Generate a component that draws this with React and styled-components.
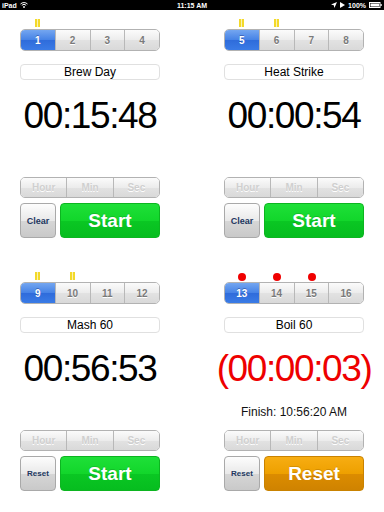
import styled, { createGlobalStyle } from "styled-components";

const GlobalStyle = createGlobalStyle`
  html, body {
    margin: 0;
    padding: 0;
    background: #fff;
    font-family: "Liberation Sans", Arial, sans-serif;
  }
  #root {
    width: 384px;
    height: 512px;
    overflow: hidden;
  }
`;

const StatusBar = styled.div`
  height: 10px;
  background: #000;
  color: #fff;
  display: flex;
  align-items: center;
  justify-content: space-between;
  padding: 0 2px;
  font-size: 7px;
  font-weight: bold;
  position: relative;
`;

const StatusSide = styled.div`
  display: flex;
  align-items: center;
  gap: 3px;
`;

const StatusClock = styled.div`
  position: absolute;
  left: 0;
  right: 0;
  text-align: center;
  pointer-events: none;
`;

const Grid = styled.div`
  display: grid;
  grid-template-columns: 140px 140px;
  grid-auto-rows: 253px;
  column-gap: 64px;
  padding: 0 20px;
`;

const Panel = styled.div`
  display: flex;
  flex-direction: column;
`;

const MarkerRow = styled.div`
  display: flex;
  height: 8px;
  margin-top: 9px;
`;

const MarkerCell = styled.div`
  flex: 1;
  display: flex;
  justify-content: center;
  align-items: center;
`;

const YellowMark = styled.span`
  width: 5px;
  height: 8px;
  background: linear-gradient(
    90deg,
    #f3d92a 0 2px,
    #fbf2b0 2px 3px,
    #f3d92a 3px 5px
  );
`;

const RedDot = styled.span`
  width: 8px;
  height: 8px;
  border-radius: 50%;
  background: #f00000;
  margin-top: 2px;
`;

const Segmented = styled.div`
  display: flex;
  height: ${({ h }) => h || 22}px;
  margin-top: ${({ mt }) => mt || 0}px;
  border: 1px solid #b2b2b2;
  border-radius: 5px;
  overflow: hidden;
  box-sizing: border-box;
`;

const Segment = styled.div`
  flex: 1;
  display: flex;
  align-items: center;
  justify-content: center;
  font-size: 10px;
  font-weight: bold;
  color: ${({ active, faded }) =>
    active ? "#fff" : faded ? "#cfcfcf" : "#7a7a7a"};
  text-shadow: ${({ active }) =>
    active ? "0 -1px 0 rgba(0,0,60,0.3)" : "0 1px 0 #fff"};
  background: ${({ active }) =>
    active
      ? "linear-gradient(#74a6f0, #4582e6 50%, #2f6cdb 52%, #3a7be6)"
      : "linear-gradient(#fbfbfb, #ececec 50%, #e2e2e2 52%, #d9d9d9)"};
  & + & {
    border-left: 1px solid #b8b8b8;
  }
`;

const Label = styled.div`
  height: 16px;
  margin-top: 13px;
  border: 1px solid #e0e0e0;
  border-radius: 4px;
  box-sizing: border-box;
  display: flex;
  align-items: center;
  justify-content: center;
  font-size: 12px;
  color: #000;
`;

const Time = styled.div`
  margin-top: ${({ mt }) => mt}px;
  height: 37px;
  line-height: 37px;
  font-size: 37px;
  letter-spacing: -1.4px;
  text-align: center;
  white-space: nowrap;
  color: ${({ alarm }) => (alarm ? "#ee0000" : "#000")};
  margin-left: ${({ alarm }) => (alarm ? -10 : 0)}px;
  margin-right: ${({ alarm }) => (alarm ? -10 : 0)}px;
`;

const Info = styled.div`
  height: 43px;
  display: flex;
  align-items: flex-start;
  justify-content: center;
  padding-top: 18px;
  box-sizing: border-box;
  font-size: 12px;
  color: #111;
  white-space: nowrap;
`;

const ButtonRow = styled.div`
  display: flex;
  gap: 4px;
  height: 35px;
  margin-top: 5px;
`;

const SmallButton = styled.div`
  width: 36px;
  box-sizing: border-box;
  border: 1px solid #a9a9a9;
  border-radius: 4px;
  background: linear-gradient(#fdfdfd, #e9e9e9 50%, #d6d6d6 52%, #c9c9c9);
  display: flex;
  align-items: center;
  justify-content: center;
  font-size: ${({ tight }) => (tight ? 8 : 9)}px;
  font-weight: bold;
  color: #22375f;
`;

const BigButton = styled.div`
  flex: 1;
  border-radius: 4px;
  display: flex;
  align-items: center;
  justify-content: center;
  font-size: 19px;
  font-weight: bold;
  color: #fff;
  text-shadow: 0 -1px 0 rgba(0, 0, 0, 0.15);
  background: ${({ tone }) =>
    tone === "orange"
      ? "linear-gradient(#f7ad12, #eea000 50%, #dc8c00 52%, #cf8300)"
      : "linear-gradient(#1ee038, #12d62b 50%, #0ac723 52%, #06bd1f)"};
  border: 1px solid
    ${({ tone }) => (tone === "orange" ? "#c98200" : "#0cb520")};
  box-sizing: border-box;
`;

const timers = [
  {
    slots: [1, 2, 3, 4],
    active: 0,
    marks: [0],
    mark: "bar",
    name: "Brew Day",
    time: "00:15:48",
    left: "Clear",
    right: "Start",
  },
  {
    slots: [5, 6, 7, 8],
    active: 0,
    marks: [0, 1],
    mark: "bar",
    name: "Heat Strike",
    time: "00:00:54",
    left: "Clear",
    right: "Start",
  },
  {
    slots: [9, 10, 11, 12],
    active: 0,
    marks: [0, 1],
    mark: "bar",
    name: "Mash 60",
    time: "00:56:53",
    left: "Reset",
    right: "Start",
  },
  {
    slots: [13, 14, 15, 16],
    active: 0,
    marks: [0, 1, 2],
    mark: "dot",
    name: "Boil 60",
    time: "(00:00:03)",
    alarm: true,
    finish: "Finish: 10:56:20 AM",
    left: "Reset",
    right: "Reset",
    tone: "orange",
  },
];

const Wifi = () => (
  <svg width="8" height="6" viewBox="0 0 8 6">
    <path d="M0.5 2 A5 5 0 0 1 7.5 2" stroke="#fff" strokeWidth="1" fill="none" />
    <path d="M1.8 3.3 A3.2 3.2 0 0 1 6.2 3.3" stroke="#fff" strokeWidth="1" fill="none" />
    <circle cx="4" cy="5" r="0.9" fill="#fff" />
  </svg>
);

const Battery = () => (
  <svg width="13" height="6" viewBox="0 0 13 6">
    <rect x="0.5" y="0.5" width="10.5" height="5" fill="none" stroke="#fff" strokeWidth="1" />
    <rect x="1.5" y="1.5" width="8.5" height="3" fill="#fff" />
    <rect x="11.5" y="2" width="1.2" height="2" fill="#fff" />
  </svg>
);

const TimerPanel = ({ t }) => (
  <Panel>
    <MarkerRow>
      {t.slots.map((s, i) => (
        <MarkerCell key={s}>
          {t.marks.includes(i) &&
            (t.mark === "dot" ? <RedDot /> : <YellowMark />)}
        </MarkerCell>
      ))}
    </MarkerRow>
    <Segmented mt={2}>
      {t.slots.map((s, i) => (
        <Segment key={s} active={i === t.active}>
          {s}
        </Segment>
      ))}
    </Segmented>
    <Label>{t.name}</Label>
    <Time mt={17} alarm={t.alarm}>
      {t.time}
    </Time>
    <Info>{t.finish}</Info>
    <Segmented h={21}>
      <Segment faded>Hour</Segment>
      <Segment faded>Min</Segment>
      <Segment faded>Sec</Segment>
    </Segmented>
    <ButtonRow>
      <SmallButton tight={t.left === "Reset"}>{t.left}</SmallButton>
      <BigButton tone={t.tone}>{t.right}</BigButton>
    </ButtonRow>
  </Panel>
);

export default function App() {
  return (
    <>
      <GlobalStyle />
      <StatusBar>
        <StatusSide>
          <span>iPad</span>
          <Wifi />
        </StatusSide>
        <StatusClock>11:15 AM</StatusClock>
        <StatusSide>
          <svg width="6" height="6" viewBox="0 0 6 6">
            <path d="M6 0 L0 2.6 L2.8 3.2 L3.4 6 Z" fill="#fff" />
          </svg>
          <svg width="5" height="6" viewBox="0 0 5 6">
            <path d="M0 0 L5 3 L0 6 Z" fill="#fff" />
          </svg>
          <span>100%</span>
          <Battery />
        </StatusSide>
      </StatusBar>
      <Grid>
        {timers.map((t) => (
          <TimerPanel key={t.name} t={t} />
        ))}
      </Grid>
    </>
  );
}
